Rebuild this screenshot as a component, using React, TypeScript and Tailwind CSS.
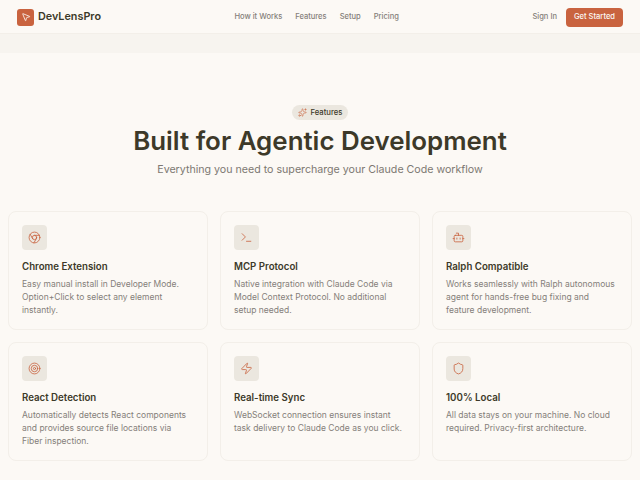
import { Bot, Chrome, MousePointer2, Shield, Sparkles, Target, Terminal, Zap } from "lucide-react";

const features = [
  { icon: Chrome, title: "Chrome Extension", text: "Easy manual install in Developer Mode. Option+Click to select any element instantly." },
  { icon: Terminal, title: "MCP Protocol", text: "Native integration with Claude Code via Model Context Protocol. No additional setup needed." },
  { icon: Bot, title: "Ralph Compatible", text: "Works seamlessly with Ralph autonomous agent for hands-free bug fixing and feature development." },
  { icon: Target, title: "React Detection", text: "Automatically detects React components and provides source file locations via Fiber inspection." },
  { icon: Zap, title: "Real-time Sync", text: "WebSocket connection ensures instant task delivery to Claude Code as you click." },
  { icon: Shield, title: "100% Local", text: "All data stays on your machine. No cloud required. Privacy-first architecture." },
];

const links = ["How it Works", "Features", "Setup", "Pricing"];

export default function App() {
  return (
    <div className="h-[480px] overflow-hidden bg-[#fcf9f5] font-['Inter',sans-serif] text-[#3d3929]">
      <nav className="flex h-[34px] items-center justify-between border-b border-[#f3efe9] px-[17px] pt-[1px]">
        <div className="flex items-center gap-[4px]">
          <div className="flex h-[17px] w-[17px] items-center justify-center rounded-[3px] bg-[#c9633f]">
            <MousePointer2 className="h-[10px] w-[10px] text-[#fbf8f4]" strokeWidth={2} />
          </div>
          <span className="text-[10.8px] font-semibold">DevLensPro</span>
        </div>
        <div className="flex items-center gap-[13px] text-[7.55px] font-medium text-[#85807a]">
          {links.map((l) => (
            <a key={l}>{l}</a>
          ))}
        </div>
        <div className="flex items-center gap-[9px]">
          <span className="text-[7.55px] font-medium text-[#85807a]">Sign In</span>
          <button className="h-[19px] w-[57px] rounded-[4px] bg-[#c9633f] text-[7.55px] font-medium text-[#fbf8f4]">Get Started</button>
        </div>
      </nav>
      <div className="h-[19px] bg-[#f7f4ef]" />
      <section className="flex flex-col items-center pt-[52px]">
        <div className="flex h-[15px] items-center gap-[4px] rounded-full bg-[#ebe7df] px-[6px] text-[7.7px] font-medium">
          <Sparkles className="h-[9px] w-[9px] text-[#c9633f]" strokeWidth={1.5} />
          Features
        </div>
        <h1 className="mt-[5px] text-[25.9px] leading-[32px] font-semibold">Built for Agentic Development</h1>
        <p className="mt-[5px] text-[10.65px] leading-[16px] text-[#7d7872]">Everything you need to supercharge your Claude Code workflow</p>
        <div className="mt-[33px] grid w-full grid-cols-3 gap-[12px] px-[8px]">
          {features.map((f) => (
            <div key={f.title} className="h-[119px] rounded-[8px] border border-[#f3efe9] bg-[#fcf9f5] p-[13px]">
              <div className="flex h-[25px] w-[25px] items-center justify-center rounded-[4px] bg-[#ebe7df]">
                <f.icon className="h-[13px] w-[13px] text-[#c9633f]" strokeWidth={1.5} />
              </div>
              <h3 className="mt-[9px] text-[9.7px] leading-[16px] font-semibold">{f.title}</h3>
              <p className="mt-[3px] text-[8.5px] leading-[13px] text-[#85807a]">{f.text}</p>
            </div>
          ))}
        </div>
      </section>
    </div>
  );
}
